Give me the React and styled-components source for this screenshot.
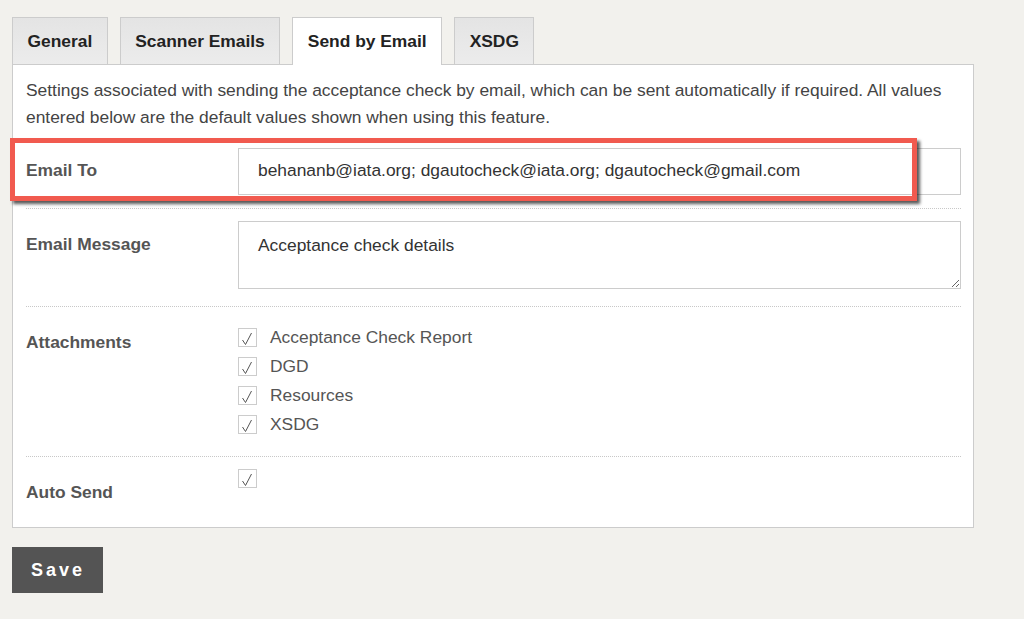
import React, { useState } from 'react';
import styled, { createGlobalStyle } from 'styled-components';

const FS = '17.4px';

const GlobalStyle = createGlobalStyle`
  body {
    margin: 0;
    background: #f2f1ed;
    font-family: "Liberation Sans", Arial, sans-serif;
    font-size: ${FS};
    color: #333;
  }
`;

const Page = styled.div`
  padding: 17px 50px 20px 12px;
  width: 962px;
`;

const TabBar = styled.div`
  display: flex;
  align-items: flex-end;
  gap: 12px;
  height: 48px;
  margin-bottom: -1px;
  position: relative;
  z-index: 1;
`;

const Tab = styled.button`
  font-family: inherit;
  font-size: ${FS};
  font-weight: bold;
  color: #222;
  height: ${p => (p.$active ? '48px' : '47px')};
  margin-bottom: ${p => (p.$active ? '0' : '1px')};
  padding: 0 14.5px;
  border: 1px solid #cccccc;
  border-bottom: none;
  background: ${p => (p.$active ? '#fff' : 'linear-gradient(#e4e4e4, #ececec)')};
  cursor: pointer;
  box-sizing: border-box;
`;

const Panel = styled.div`
  background: #fff;
  border: 1px solid #cccccc;
  padding: 12px 12px 0 13px;
`;

const Intro = styled.p`
  margin: 0;
  line-height: 27px;
  color: #444;
`;

const Row = styled.div`
  position: relative;
  display: grid;
  grid-template-columns: 212px 1fr;
  align-items: start;
  padding: ${p => p.$pt}px 0 ${p => p.$pb}px;
  border-bottom: ${p => (p.$last ? 'none' : '1px dotted #c8c8c8')};
`;

const Label = styled.div`
  font-weight: bold;
  color: #555;
  line-height: 20px;
  margin-top: ${p => p.$top}px;
`;

const TextInput = styled.input`
  display: block;
  box-sizing: border-box;
  width: 100%;
  height: 47px;
  padding: 0 19px 2px;
  border: 1px solid #cccccc;
  font-family: inherit;
  font-size: ${FS};
  color: #333;
  outline: none;
`;

const TextArea = styled.textarea`
  display: block;
  box-sizing: border-box;
  width: 100%;
  height: 68px;
  padding: 13px 19px;
  border: 1px solid #cccccc;
  font-family: inherit;
  font-size: ${FS};
  line-height: 20px;
  color: #333;
  outline: none;
`;

const CheckList = styled.div`
  display: flex;
  flex-direction: column;
  gap: 10px;
`;

const CheckRow = styled.label`
  display: flex;
  align-items: center;
  gap: 13px;
  height: 19px;
  color: #555;
  line-height: 19px;
  cursor: pointer;
`;

const Box = styled.span`
  width: 19px;
  height: 19px;
  box-sizing: border-box;
  border: 1px solid #cccccc;
  background: #fff;
  flex: none;
  display: flex;
`;

const Highlight = styled.div`
  position: absolute;
  left: -16px;
  top: 7px;
  width: 907px;
  height: 63px;
  box-sizing: border-box;
  border: 5px solid #f15a4f;
  box-shadow: 3px 3px 3px rgba(0, 0, 0, 0.65);
  pointer-events: none;
`;

const SaveButton = styled.button`
  margin-top: 19px;
  height: 46px;
  padding: 0 18px 0 19px;
  background: #545454;
  border: none;
  color: #fff;
  font-family: inherit;
  font-size: 18px;
  font-weight: bold;
  letter-spacing: 3px;
  cursor: pointer;
`;

const Check = ({ checked }) => (
  <Box>
    {checked && (
      <svg width="17" height="17" viewBox="0 0 17 17">
        <polyline points="3.5,11 6.5,15.5 12.5,4" fill="none" stroke="#555" strokeWidth="1" />
      </svg>
    )}
  </Box>
);

const tabs = ['General', 'Scanner Emails', 'Send by Email', 'XSDG'];

const attachments = ['Acceptance Check Report', 'DGD', 'Resources', 'XSDG'];

export default function App() {
  const [active, setActive] = useState('Send by Email');
  const [checks, setChecks] = useState({
    'Acceptance Check Report': true,
    DGD: true,
    Resources: true,
    XSDG: true,
  });
  const [autoSend, setAutoSend] = useState(true);

  const toggle = name => setChecks(c => ({ ...c, [name]: !c[name] }));

  return (
    <Page>
      <GlobalStyle />
      <TabBar>
        {tabs.map(t => (
          <Tab key={t} $active={t === active} onClick={() => setActive(t)}>
            {t}
          </Tab>
        ))}
      </TabBar>
      <Panel>
        <Intro>
          Settings associated with sending the acceptance check by email, which can be sent automatically if
          required. All values entered below are the default values shown when using this feature.
        </Intro>

        <Row $pt={17} $pb={13}>
          <Label $top={12}>Email To</Label>
          <TextInput defaultValue="behananb@iata.org; dgautocheck@iata.org; dgautocheck@gmail.com" />
          <Highlight />
        </Row>

        <Row $pt={12} $pb={17}>
          <Label $top={13}>Email Message</Label>
          <TextArea defaultValue="Acceptance check details" />
        </Row>

        <Row $pt={21} $pb={22}>
          <Label $top={4}>Attachments</Label>
          <CheckList>
            {attachments.map(a => (
              <CheckRow key={a} onClick={() => toggle(a)}>
                <Check checked={checks[a]} />
                {a}
              </CheckRow>
            ))}
          </CheckList>
        </Row>

        <Row $pt={12} $pb={25} $last>
          <Label $top={13}>Auto Send</Label>
          <CheckRow onClick={() => setAutoSend(v => !v)}>
            <Check checked={autoSend} />
          </CheckRow>
        </Row>
      </Panel>
      <SaveButton>Save</SaveButton>
    </Page>
  );
}
